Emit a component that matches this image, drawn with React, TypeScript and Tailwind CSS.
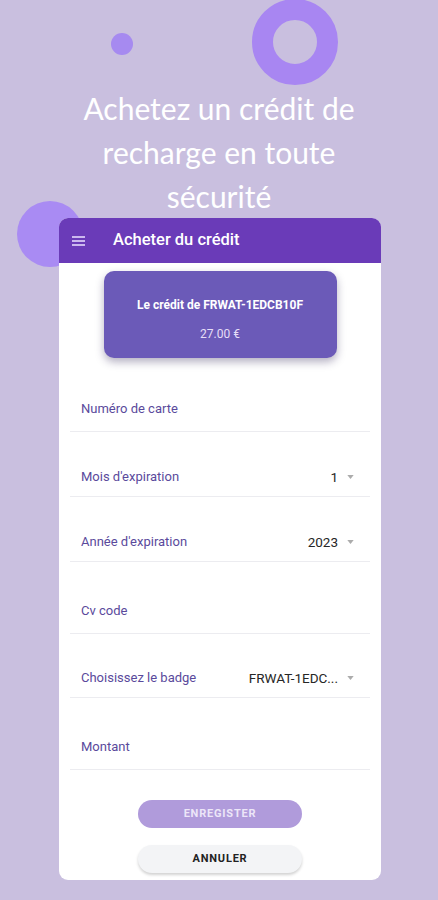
import React from "react";

const Caret = () => (
  <svg width="7" height="4" viewBox="0 0 8 5" className="ml-[9px]">
    <path d="M0 0 L8 0 L4 5 Z" fill="#acacac" />
  </svg>
);

const TextRow = ({ label, h }: { label: string; h: string }) => (
  <div className={`flex items-end border-b border-[#ececf0] pl-[11px] pb-[13px] ${h}`}>
    <span className="text-[13px] leading-[18px] text-[#5a4a9c]">{label}</span>
  </div>
);

const SelectRow = ({ label, value, h }: { label: string; value: string; h: string }) => (
  <div className={`flex items-end border-b border-[#ececf0] pl-[11px] pr-[16px] pb-[10px] ${h}`}>
    <span className="text-[13px] leading-[18px] text-[#5a4a9c]">{label}</span>
    <div className="ml-auto flex items-center">
      <span className="text-[13.5px] leading-[18px] font-normal text-[#262626]">{value}</span>
      <Caret />
    </div>
  </div>
);

const App = () => {
  return (
    <div
      className="relative min-h-[900px] w-full overflow-hidden bg-[#c9bfdf]"
      style={{ fontFamily: "Roboto, 'Noto Sans', sans-serif" }}
    >
      {/* decorations */}
      <div className="absolute left-[111px] top-[33px] h-[22px] w-[22px] rounded-full bg-[#a68af0]" />
      <div className="absolute left-[252px] top-[-1px] h-[86px] w-[86px] rounded-full border-[21px] border-[#a886f2]" />
      <div className="absolute left-[17px] top-[201px] h-[66px] w-[66px] rounded-full bg-[#a98bf3]" />

      <h1
        className="relative pt-[86px] text-center text-[30px] font-normal leading-[44px] text-white"
        style={{ fontFamily: "Lato, 'Noto Sans', sans-serif" }}
      >
        Achetez un crédit de
        <br />
        recharge en toute
        <br />
        sécurité
      </h1>

      <div className="relative ml-[59px] mt-0 w-[322px] overflow-hidden rounded-[9px] bg-white">
        <header className="flex h-[45px] items-center bg-[#6a3bb8] pl-[13px]">
          <div className="flex w-[13px] flex-col gap-[2px]">
            <span className="h-[2px] bg-[#cbb8ee]" />
            <span className="h-[2px] bg-[#cbb8ee]" />
            <span className="h-[2px] bg-[#cbb8ee]" />
          </div>
          <span className="ml-[28px] text-[16.5px] font-medium text-white">Acheter du crédit</span>
        </header>

        <div className="flex justify-center pt-[8px]">
          <div className="flex h-[87px] w-[233px] flex-col items-center rounded-[10px] bg-[#6b5ab8] pt-[25px] shadow-[0_4px_8px_rgba(40,30,80,0.35)]">
            <span className="text-[12px] font-bold leading-[18px] text-white">Le crédit de FRWAT-1EDCB10F</span>
            <span className="mt-[11px] text-[12px] leading-[18px] text-[#e6def7]">27.00 €</span>
          </div>
        </div>

        <div className="px-[11px]">
          <TextRow label="Numéro de carte" h="h-[74px]" />
          <SelectRow label="Mois d'expiration" value="1" h="h-[65px]" />
          <SelectRow label="Année d'expiration" value="2023" h="h-[65px]" />
          <TextRow label="Cv code" h="h-[72px]" />
          <SelectRow label="Choisissez le badge" value="FRWAT-1EDC..." h="h-[64px]" />
          <TextRow label="Montant" h="h-[72px]" />
        </div>

        <div className="flex flex-col items-center pt-[30px] pb-[7px]">
          <button className="h-[28px] w-[164px] rounded-full bg-[#b09bdb] text-[11px] font-bold tracking-[0.8px] text-[#ece6f8]">
            ENREGISTER
          </button>
          <button className="mt-[17px] h-[28px] w-[164px] rounded-full bg-[#f3f4f6] text-[11px] font-bold tracking-[0.8px] text-[#222] shadow-[0_2px_3px_rgba(0,0,0,0.18)]">
            ANNULER
          </button>
        </div>
      </div>
    </div>
  );
};

export default App;
